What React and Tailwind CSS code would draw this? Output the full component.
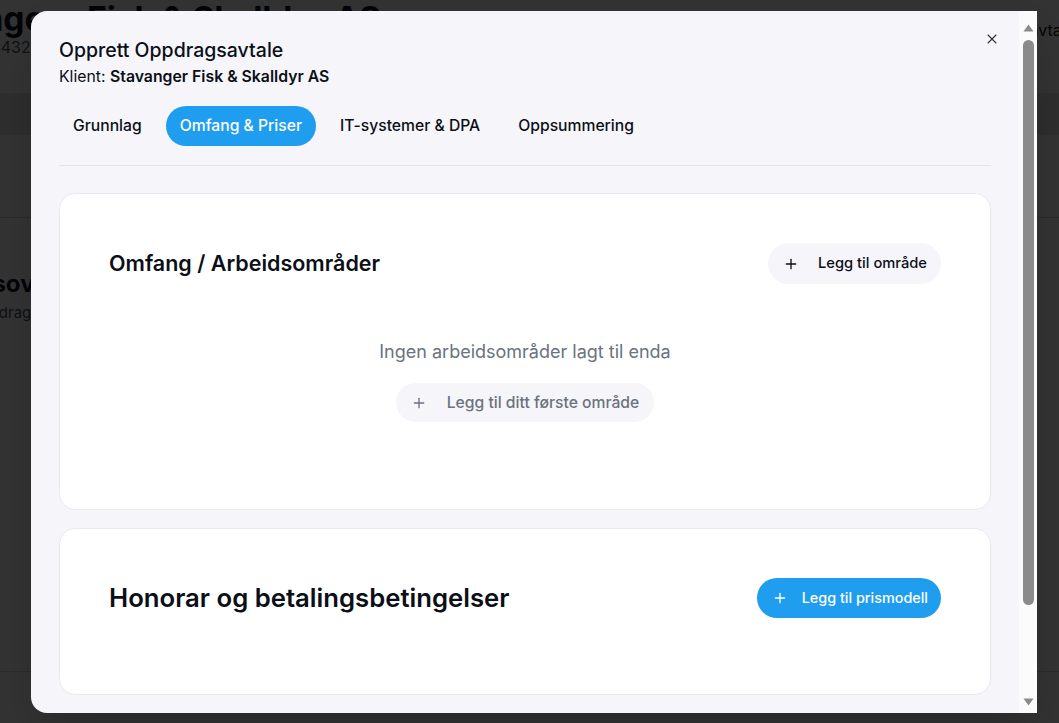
import React from 'react';
import { Plus, X } from 'lucide-react';

const font = { fontFamily: 'Inter, "Noto Sans", sans-serif' };

function BackgroundPage() {
  return (
    <div className="h-[723px] w-full overflow-hidden bg-white">
      <div className="-ml-[110px] w-[1240px]">
        <div className="flex h-[93px] items-start justify-between pr-[55px]">
          <div>
            <h1 className="mt-[1px] flex gap-[29px] text-[33.5px] font-bold leading-[36px] text-gray-900">
              <span>Stavanger</span>
              <span>Fisk &amp; Skalldyr AS</span>
            </h1>
            <p className="ml-[10px] -mt-[2px] text-[16px] leading-6 text-gray-600">Org.nr 987654321</p>
          </div>
          <p className="mt-[18px] text-[16px] text-gray-900">Ny oppdragsavtale</p>
        </div>
        <div className="h-[42px] bg-gray-200"></div>
        <div className="h-[83px] border-b border-gray-300"></div>
        <div className="h-[454px] border-b border-gray-300 pt-[50px]">
          <h2 className="text-[24px] font-bold leading-8 text-gray-900">Oppdragsoversikt</h2>
          <p className="ml-[79px] mt-[2px] text-[15px] text-gray-600">Oppdragsavtaler for klienten</p>
        </div>
      </div>
    </div>
  );
}

function Scrollbar() {
  return (
    <div className="flex w-[18px] shrink-0 flex-col items-center bg-[#fbfbfb]">
      <svg width="11" height="8" viewBox="0 0 11 8" className="mt-[13px]">
        <path d="M5.5 0.5 L10.5 7.5 L0.5 7.5 Z" fill="#8b8b8b" />
      </svg>
      <div className="mt-[8px] h-[565px] w-[11px] rounded-full bg-[#8b8b8b]"></div>
      <div className="flex-1"></div>
      <svg width="11" height="8" viewBox="0 0 11 8" className="mb-[7px]">
        <path d="M0.5 0.5 L10.5 0.5 L5.5 7.5 Z" fill="#8b8b8b" />
      </svg>
    </div>
  );
}

const tabs = ['Grunnlag', 'Omfang & Priser', 'IT-systemer & DPA', 'Oppsummering'];

export default function App() {
  return (
    <div className="relative h-[723px] w-[1059px] overflow-hidden" style={font}>
      <BackgroundPage />
      <div className="absolute inset-0 bg-black/80"></div>

      <div className="absolute left-[31px] top-[11px] flex h-[702px] w-[1006px] overflow-hidden rounded-l-2xl bg-[#f6f6fa] shadow-2xl">
        <div className="relative flex-1 overflow-hidden px-7 pt-[25px]">
          <button className="absolute right-[19px] top-[20px] text-[#333]">
            <X size={16} strokeWidth={1.6} />
          </button>

          <h2 className="text-[19.5px] font-medium leading-7 text-[#0b0f17]">Opprett Oppdragsavtale</h2>
          <p className="mt-[3px] text-[15.8px] leading-5 text-[#0b0f17]">
            Klient: <span className="font-semibold">Stavanger Fisk &amp; Skalldyr AS</span>
          </p>

          <div className="mt-[19px] flex gap-[10px] border-b border-[#e1e6ee] pb-[19px]">
            {tabs.map((t) => (
              <button
                key={t}
                className={
                  t === 'Omfang & Priser'
                    ? 'h-10 rounded-full bg-[#1f9ef0] px-[14px] text-[15.7px] font-medium text-white'
                    : 'h-10 rounded-full px-[14px] text-[15.7px] font-medium text-[#0b0f17]'
                }
              >
                {t}
              </button>
            ))}
          </div>

          <div className="mt-[27px] flex flex-col gap-[18px]">
            <section className="rounded-2xl border border-[#e8e8ef] bg-white px-[49px] pb-[50px] pt-[49px]">
              <div className="flex items-center justify-between">
                <h3 className="text-[21.5px] font-semibold text-[#0b0f17]">Omfang / Arbeidsområder</h3>
                <button className="flex h-[41px] items-center gap-[19px] rounded-full bg-[#f5f5fa] pl-[15px] pr-[14px] text-[14.7px] font-medium text-[#0b0f17]">
                  <Plus size={16} strokeWidth={2} />
                  Legg til område
                </button>
              </div>
              <div className="flex flex-col items-center pb-[37px] pt-[56px]">
                <p className="text-[18px] leading-6 text-[#6b7280]">Ingen arbeidsområder lagt til enda</p>
                <button className="mt-[19px] flex h-[39px] items-center gap-[20px] rounded-full bg-[#f6f6fa] pl-[15px] pr-[15px] text-[15.7px] font-medium text-[#6b7280]">
                  <Plus size={16} strokeWidth={2} />
                  Legg til ditt første område
                </button>
              </div>
            </section>

            <section className="rounded-2xl border border-[#e8e8ef] bg-white px-[49px] pb-[76px] pt-[49px]">
              <div className="flex items-center justify-between">
                <h3 className="text-[25.7px] font-semibold text-[#0b0f17]">Honorar og betalingsbetingelser</h3>
                <button className="flex h-10 items-center gap-[14px] rounded-full bg-[#1f9ef0] pl-[15px] pr-[13px] text-[14.4px] font-medium text-white">
                  <Plus size={16} strokeWidth={2} />
                  Legg til prismodell
                </button>
              </div>
            </section>

            <section className="h-[200px] rounded-2xl border border-[#e8e8ef] bg-white"></section>
          </div>
        </div>
        <Scrollbar />
      </div>
    </div>
  );
}
